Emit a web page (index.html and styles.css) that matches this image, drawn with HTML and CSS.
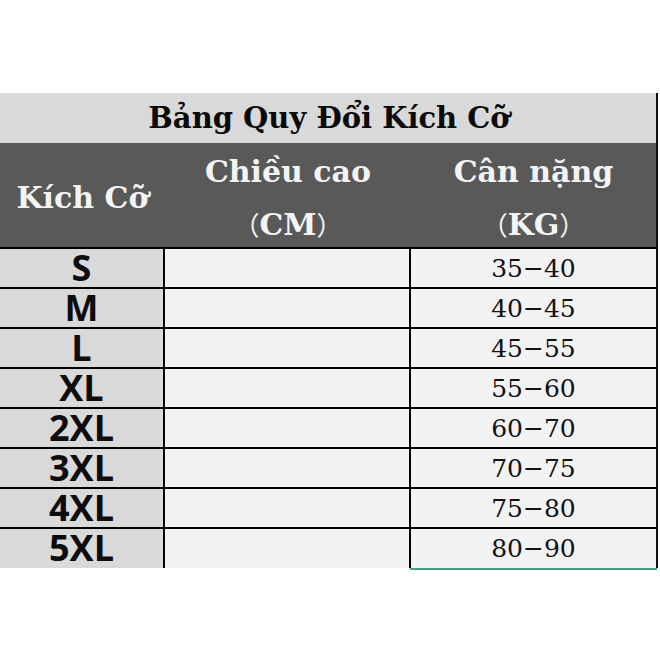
FILE: index.html
```html
<!DOCTYPE html>
<html lang="vi">
<head>
<meta charset="utf-8">
<title>Bảng Quy Đổi Kích Cỡ</title>
<link rel="stylesheet" href="styles.css">
</head>
<body>
<div class="sheet">
  <div class="title">Bảng Quy Đổi Kích Cỡ</div>
  <div class="head">
    <div class="hcell">Kích Cỡ</div>
    <div class="hcell two"><span>Chiều cao</span><span><span class="paren">（</span>CM<span class="paren">）</span></span></div>
    <div class="hcell two"><span>Cân nặng</span><span><span class="paren">（</span>KG<span class="paren">）</span></span></div>
  </div>
  <div class="row"><div class="size">S</div><div class="blank"></div><div class="num">35−40</div></div>
  <div class="row"><div class="size">M</div><div class="blank"></div><div class="num">40−45</div></div>
  <div class="row"><div class="size">L</div><div class="blank"></div><div class="num">45−55</div></div>
  <div class="row"><div class="size">XL</div><div class="blank"></div><div class="num">55−60</div></div>
  <div class="row"><div class="size">2XL</div><div class="blank"></div><div class="num">60−70</div></div>
  <div class="row"><div class="size">3XL</div><div class="blank"></div><div class="num">70−75</div></div>
  <div class="row"><div class="size">4XL</div><div class="blank"></div><div class="num">75−80</div></div>
  <div class="row last"><div class="size">5XL</div><div class="blank"></div><div class="num">80−90</div></div>
  <div class="selection"></div>
</div>
</body>
</html>
```
FILE: styles.css
```css
* { box-sizing: border-box; }
html, body { margin: 0; padding: 0; background: #ffffff; }
.sheet {
  margin-top: 93px;
  width: 658px;
}
.title {
  height: 50px;
  background: #d9d9d9;
  border-right: 2px solid #111;
  display: flex;
  align-items: center;
  justify-content: center;
  font-family: "DejaVu Serif", serif;
  font-weight: bold;
  font-size: 29px;
  color: #0a0a0a;
  padding-left: 2px;
}
.head {
  height: 106px;
  background: #595959;
  border-right: 2px solid #111;
  border-bottom: 2px solid #000;
  display: grid;
  grid-template-columns: 165px 246px 1fr;
  grid-template-rows: minmax(0, 1fr);
  font-family: "DejaVu Serif", serif;
  font-weight: bold;
  font-size: 30px;
  color: #f4f4f4;
}
.hcell {
  display: flex;
  align-items: center;
  justify-content: center;
  padding-top: 4px;
}
.hcell.two {
  flex-direction: column;
  line-height: 52px;
  padding-top: 6px;
}
.paren {
  font-family: "Noto Sans CJK SC", sans-serif;
  font-weight: normal;
  font-size: 26px;
}
.row {
  height: 40px;
  display: grid;
  grid-template-columns: 165px 246px 1fr;
  grid-template-rows: minmax(0, 1fr);
  border-bottom: 2px solid #000;
  border-right: 2px solid #111;
}
.row.last { height: 39px; border-bottom: none; }
.size {
  background: #d9d9d9;
  border-right: 2px solid #000;
  font-family: "Open Sans", sans-serif;
  font-weight: bold;
  font-size: 36px;
  line-height: 38px;
  text-align: center;
  color: #0d0d0d;
}
.blank {
  background: #f2f2f2;
  border-right: 2px solid #000;
}
.num {
  background: #f2f2f2;
  font-family: "DejaVu Serif", serif;
  font-size: 25px;
  line-height: 38px;
  text-align: center;
  color: #111;
  padding-top: 1px;
}
.selection {
  margin-left: 410px;
  width: 247px;
  height: 2px;
  background: #3fa67c;
}
```
